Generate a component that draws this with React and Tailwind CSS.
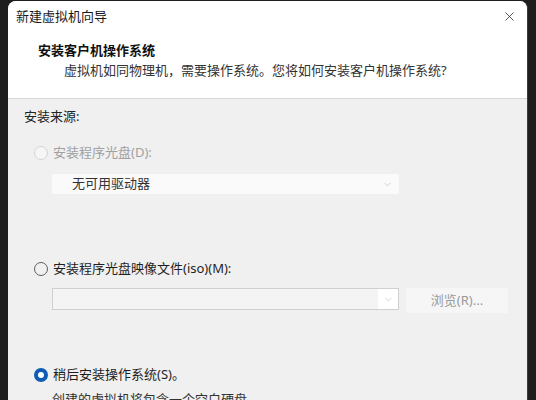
import { X, ChevronDown } from 'lucide-react';

const font = { fontFamily: '"Noto Sans", "Noto Sans CJK SC", sans-serif' };

const Radio = ({ checked, disabled, label }) => (
  <div className="flex items-center h-[20px]">
    {checked ? (
      <span className="w-[14px] h-[14px] rounded-full bg-[#0f5cb4] flex items-center justify-center">
        <span className="w-[6px] h-[6px] rounded-full bg-white"></span>
      </span>
    ) : (
      <span
        className={
          'w-[14px] h-[14px] rounded-full border ' +
          (disabled ? 'border-[#d4d4d4] bg-[#f6f6f6]' : 'border-[#5f5f5f] bg-transparent')
        }
      ></span>
    )}
    <span className={'ml-[5px] text-[13px] ' + (disabled ? 'text-[#a0a0a0]' : 'text-[#1e1e1e]')}>{label}</span>
  </div>
);

const App = () => {
  return (
    <div className="w-[536px] h-[400px] bg-[#1e1e1e] overflow-hidden pl-[8px] pr-[8px] pt-[1px]" style={font}>
      <div className="h-[420px] bg-[#f0f0f0] rounded-t-[8px] border-r border-[#3c3c3c] overflow-hidden">
        {/* Header */}
        <div className="bg-white h-[98px] border-b border-[#d8d8d8]">
          <div className="h-[31px] flex items-center justify-between pl-[8px] pr-[10px]">
            <span className="text-[13px] text-[#1a1a1a]">新建虚拟机向导</span>
            <X className="w-[15px] h-[15px] text-[#333]" strokeWidth={1.3} />
          </div>
          <div className="pl-[30px] mt-[8px] text-[13px] font-bold text-[#111] leading-[20px]">安装客户机操作系统</div>
          <div className="pl-[56px] text-[13px] text-[#333] leading-[20px]">
            虚拟机如同物理机，需要操作系统。您将如何安装客户机操作系统?
          </div>
        </div>

        {/* Body */}
        <div className="pl-[16px] pr-[19px]">
          <div className="mt-[7px] text-[13px] text-[#222] leading-[20px]">安装来源:</div>

          <div className="ml-[10px] mt-[17px]">
            <Radio disabled label="安装程序光盘(D):" />
          </div>
          <div className="ml-[28px] mt-[11px] w-[347px] h-[20px] bg-[#fafafa] flex items-center justify-between pl-[20px] pr-[6px]">
            <span className="text-[13px] text-[#333]">无可用驱动器</span>
            <ChevronDown className="w-[11px] h-[11px] text-[#b8b8b8]" strokeWidth={1.3} />
          </div>

          <div className="ml-[10px] mt-[65px]">
            <Radio label="安装程序光盘映像文件(iso)(M):" />
          </div>
          <div className="ml-[28px] mt-[9px] flex items-start">
            <div className="w-[347px] h-[22px] bg-[#f4f4f4] border border-[#d0d0d0] flex items-center justify-end">
              <div className="w-[20px] h-full bg-white flex items-center justify-center">
                <ChevronDown className="w-[11px] h-[11px] text-[#b8b8b8]" strokeWidth={1.3} />
              </div>
            </div>
            <div className="ml-[7px] w-[102px] h-[25px] bg-[#f6f6f6] flex items-center justify-center text-[13px] text-[#9a9a9a]">
              浏览(R)...
            </div>
          </div>

          <div className="ml-[10px] mt-[52px]">
            <Radio checked label="稍后安装操作系统(S)。" />
          </div>
          <div className="ml-[28px] mt-[4px] text-[13px] text-[#333] leading-[20px]">创建的虚拟机将包含一个空白硬盘。</div>
        </div>
      </div>
    </div>
  );
};

export default App;
